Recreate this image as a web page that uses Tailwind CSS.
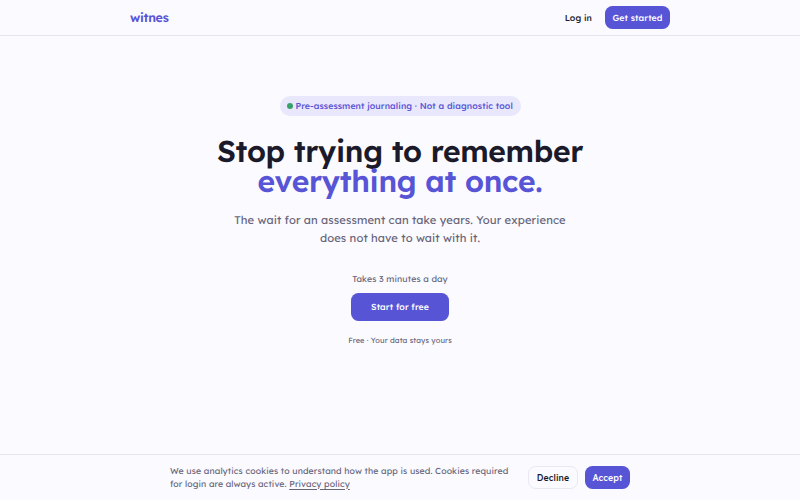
<!DOCTYPE html>
<html lang="en">
<head>
  <meta charset="UTF-8">
  <meta name="viewport" content="width=device-width, initial-scale=1.0">
  <title>witnes</title>
  <script src="https://cdn.jsdelivr.net/npm/@tailwindcss/browser@4"></script>
</head>
<body class="h-screen overflow-hidden flex flex-col bg-[#fbfaff] text-[#1b1a2b] font-[Lexend,Inter,sans-serif] tracking-[0.1px] [text-rendering:geometricPrecision]">

  <header class="h-9 shrink-0 border-b border-[#e6e5ee]">
    <div class="w-[540px] h-full mx-auto flex items-center justify-between">
      <a href="#" class="pt-px text-[12.5px] font-semibold tracking-[-0.3px] text-[#5754d6] whitespace-nowrap">witnes</a>
      <nav class="flex items-center gap-[13px] text-[8.75px] font-medium whitespace-nowrap">
        <a href="#" class="pt-[2px]">Log in</a>
        <a href="#" class="w-[65px] h-[23px] pt-[2px] flex items-center justify-center rounded-[7.5px] bg-[#5754d6] text-white">Get started</a>
      </nav>
    </div>
  </header>

  <main class="flex-1 flex flex-col items-center pt-[60px] whitespace-nowrap">
    <div class="w-[241px] h-5 flex items-center pl-[7px] gap-[3px] rounded-full bg-[#e9e7fb] text-[8.75px] font-medium text-[#5754d6]">
      <i class="size-[6px] rounded-full bg-[#38a169]"></i>
      <span class="pt-px">Pre-assessment journaling · Not a diagnostic tool</span>
    </div>

    <h1 class="mt-5 text-[30px] leading-[30px] font-semibold tracking-[-0.3px] text-center">
      Stop trying to remember<br>
      <span class="text-[#5754d6]">everything at once.</span>
    </h1>

    <p class="mt-[15px] text-[11.25px] leading-[18.3px] text-center text-[#67657a]">
      The wait for an assessment can take years. Your experience<br>
      does not have to wait with it.
    </p>

    <p class="mt-[25px] text-[8.75px] leading-[13px] text-[#67657a]">Takes 3 minutes a day</p>
    <a href="#" class="mt-[7px] w-[98px] h-7 pt-px flex items-center justify-center rounded-[7.5px] bg-[#5754d6] text-white text-[8.75px] font-medium">Start for free</a>
    <p class="mt-[14px] text-[7.5px] leading-[11px] text-[#67657a]">Free · Your data stays yours</p>
  </main>

  <footer class="h-[46px] shrink-0 border-t border-[#e6e5ee]">
    <div class="w-[460px] h-full mx-auto flex items-center justify-between whitespace-nowrap">
      <p class="pt-[2px] text-[8.75px] leading-[12.5px] text-[#67657a]">
        We use analytics cookies to understand how the app is used. Cookies required<br>
        for login are always active. <a href="#" class="underline underline-offset-2">Privacy policy</a>
      </p>
      <div class="flex gap-[7px] text-[8.75px] font-medium">
        <button class="w-[50px] h-[23px] rounded-[7.5px] border border-[#e9e8f0] tracking-[0.1px]">Decline</button>
        <button class="w-[45px] h-[23px] rounded-[7.5px] bg-[#5754d6] text-white tracking-[0.1px]">Accept</button>
      </div>
    </div>
  </footer>

</body>
</html>
